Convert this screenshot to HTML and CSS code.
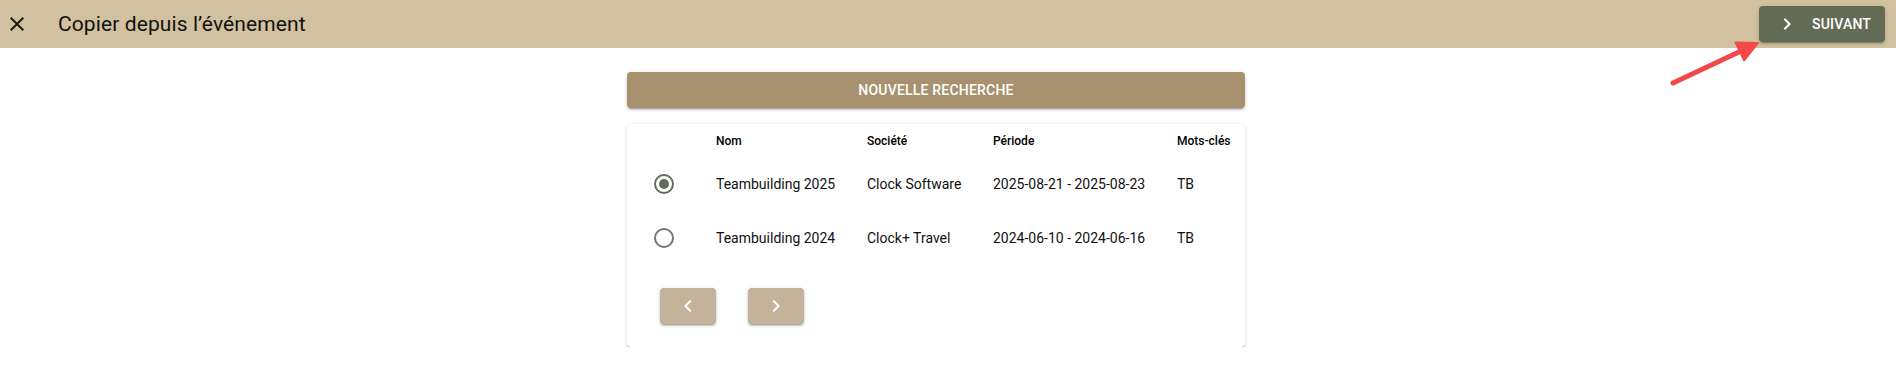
FILE: index.html
```html
<!DOCTYPE html>
<html lang="fr">
<head>
<meta charset="utf-8">
<title>Copier depuis l'événement</title>
<link rel="stylesheet" href="styles.css">
</head>
<body>
<header class="toolbar">
  <button class="icon-btn" aria-label="Fermer">
    <svg viewBox="0 0 24 24" width="24" height="24"><path d="M19 6.41L17.59 5 12 10.59 6.41 5 5 6.41 10.59 12 5 17.59 6.41 19 12 13.41 17.59 19 19 17.59 13.41 12z"/></svg>
  </button>
  <h1 class="title">Copier depuis l’événement</h1>
  <div class="spacer"></div>
  <button class="next-btn">
    <svg viewBox="0 0 24 24" width="24" height="24"><path d="M10 6L8.59 7.41 13.17 12l-4.58 4.59L10 18l6-6z"/></svg>
    <span>SUIVANT</span>
  </button>
</header>

<svg class="annot-arrow" viewBox="0 0 110 70" width="110" height="70">
  <line x1="13" y1="53" x2="80" y2="21.5" stroke="#f2494a" stroke-width="5" stroke-linecap="round"/>
  <polygon points="98,13 84.2,30.5 75.6,12.5" fill="#f2494a" stroke="#f2494a" stroke-width="2" stroke-linejoin="round"/>
</svg>

<main class="main">
  <div class="content">
    <button class="search-btn">NOUVELLE RECHERCHE</button>
    <section class="card">
      <div class="row head">
        <div class="cell"></div>
        <div class="cell">Nom</div>
        <div class="cell">Société</div>
        <div class="cell">Période</div>
        <div class="cell">Mots-clés</div>
      </div>
      <div class="row">
        <div class="cell radio-cell"><span class="radio checked"></span></div>
        <div class="cell">Teambuilding 2025</div>
        <div class="cell">Clock Software</div>
        <div class="cell">2025-08-21 - 2025-08-23</div>
        <div class="cell">TB</div>
      </div>
      <div class="row">
        <div class="cell radio-cell"><span class="radio"></span></div>
        <div class="cell">Teambuilding 2024</div>
        <div class="cell">Clock+ Travel</div>
        <div class="cell">2024-06-10 - 2024-06-16</div>
        <div class="cell">TB</div>
      </div>
      <div class="pager">
        <button class="page-btn" aria-label="Précédent">
          <svg viewBox="0 0 24 24" width="24" height="24"><path d="M15.41 7.41L14 6l-6 6 6 6 1.41-1.41L10.83 12z"/></svg>
        </button>
        <button class="page-btn" aria-label="Suivant">
          <svg viewBox="0 0 24 24" width="24" height="24"><path d="M10 6L8.59 7.41 13.17 12l-4.58 4.59L10 18l6-6z"/></svg>
        </button>
      </div>
    </section>
  </div>
</main>
</body>
</html>
```

FILE: styles.css
```css
* { box-sizing: border-box; }

html, body {
  margin: 0;
  padding: 0;
  background: #ffffff;
  font-family: Roboto, "Noto Sans", "Liberation Sans", sans-serif;
  color: #111111;
}

button {
  font-family: inherit;
  border: none;
  cursor: pointer;
}

.toolbar {
  height: 48px;
  background: #d1c19e;
  display: flex;
  align-items: center;
  padding: 0 11px 0 5px;
}

.icon-btn {
  width: 24px;
  height: 24px;
  padding: 0;
  background: transparent;
  display: flex;
  align-items: center;
  justify-content: center;
}

.icon-btn svg { fill: #1a1a1a; }

.title {
  margin: 0 0 0 29px;
  font-size: 21px;
  font-weight: 400;
  color: #111111;
  letter-spacing: 0.1px;
}

.spacer { flex: 1; }

.next-btn {
  height: 36px;
  width: 126px;
  background: #646b55;
  color: #ffffff;
  border-radius: 4px;
  display: flex;
  align-items: center;
  padding: 0 0 0 16px;
  font-size: 14px;
  font-weight: 500;
  letter-spacing: 0.2px;
  box-shadow: 0 3px 1px -2px rgba(0,0,0,.2), 0 2px 2px 0 rgba(0,0,0,.14), 0 1px 5px 0 rgba(0,0,0,.12);
}

.next-btn svg { fill: #ffffff; }
.next-btn span { margin-left: 13px; }

.annot-arrow {
  position: absolute;
  left: 1660px;
  top: 30px;
}

.main {
  display: flex;
  justify-content: center;
  padding: 24px 24px 0 0;
}

.content {
  width: 618px;
  display: flex;
  flex-direction: column;
  gap: 16px;
}

.search-btn {
  height: 36px;
  background: #a8916f;
  color: #ffffff;
  border-radius: 4px;
  font-size: 14px;
  font-weight: 500;
  letter-spacing: 0.2px;
  box-shadow: 0 3px 1px -2px rgba(0,0,0,.2), 0 2px 2px 0 rgba(0,0,0,.14), 0 1px 5px 0 rgba(0,0,0,.12);
}

.card {
  background: #ffffff;
  border-radius: 4px;
  box-shadow: 0 2px 1px -1px rgba(0,0,0,.28), 0 1px 1px 0 rgba(0,0,0,.18), 0 1px 4px 0 rgba(0,0,0,.14);
}

.row {
  display: grid;
  grid-template-columns: 89px 151px 126px 184px 1fr;
  align-items: center;
  height: 54px;
  font-size: 14px;
}

.row.head {
  height: 33px;
  padding-top: 1px;
  font-size: 12px;
  font-weight: 500;
  color: #000000;
}

.radio-cell { padding-left: 27px; display: flex; align-items: center; }

.radio {
  width: 20px;
  height: 20px;
  border-radius: 50%;
  border: 2px solid rgba(0, 0, 0, 0.54);
  display: flex;
  align-items: center;
  justify-content: center;
}

.radio.checked { border-color: #646b55; }
.radio.checked::after {
  content: "";
  width: 10px;
  height: 10px;
  border-radius: 50%;
  background: #646b55;
}

.pager {
  display: flex;
  gap: 32px;
  padding: 23px 0 23px 33px;
}

.page-btn {
  width: 56px;
  height: 36px;
  border-radius: 4px;
  background: #c3b39b;
  display: flex;
  align-items: center;
  justify-content: center;
  padding: 0;
  box-shadow: 0 3px 1px -2px rgba(0,0,0,.2), 0 2px 2px 0 rgba(0,0,0,.14), 0 1px 5px 0 rgba(0,0,0,.12);
}

.page-btn svg { fill: #ffffff; }
```
